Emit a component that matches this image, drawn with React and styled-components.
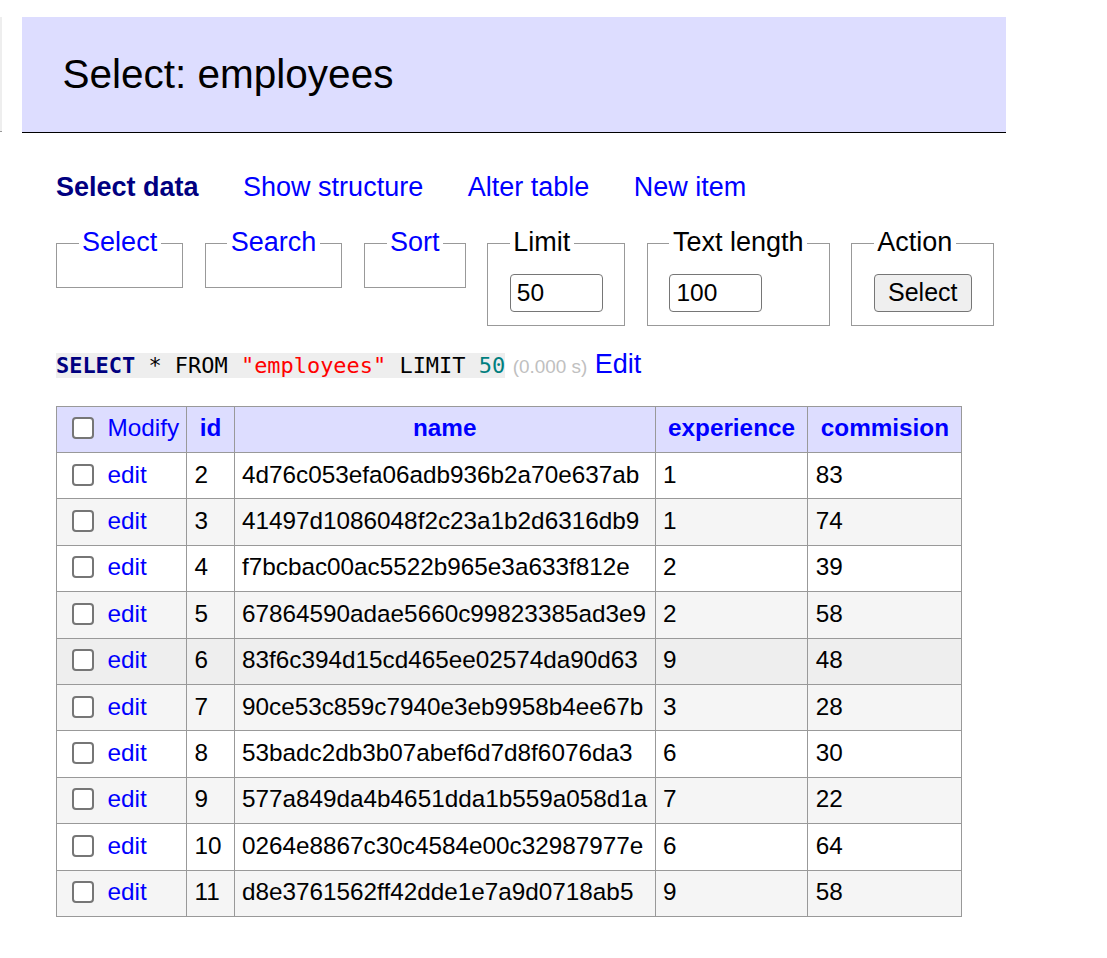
import React from "react";
import styled, { createGlobalStyle } from "styled-components";

const GlobalStyle = createGlobalStyle`
  body {
    margin: 0;
    background: #fff;
    color: #000;
    font: 27px/1.25 "Liberation Sans", Arial, Helvetica, sans-serif;
  }
  a {
    color: blue;
    text-decoration: none;
  }
`;

const Page = styled.div`
  display: flex;
  align-items: flex-start;
`;

const MenuEdge = styled.div`
  flex: 0 0 2px;
  margin-top: 17px;
  height: 114px;
  background: #eee;
  border-bottom: 1px solid #999;
`;

const Content = styled.div`
  width: 950px;
  margin-left: 54px;
  padding: 17px 0 40px;
`;

const Heading = styled.h2`
  margin: 0 0 37.5px -34px;
  padding: 32.4px 40.5px;
  font-size: 40.5px;
  line-height: 1.25;
  font-weight: normal;
  color: #000;
  background: #ddf;
  border-bottom: 1px solid #000;
`;

const Links = styled.p`
  display: flex;
  gap: 44.5px;
  margin: 0;
`;

const NavLink = styled.a`
  white-space: nowrap;
  color: ${(p) => (p.$active ? "navy" : "blue")};
  font-weight: ${(p) => (p.$active ? "bold" : "normal")};
`;

const Filters = styled.div`
  display: flex;
  align-items: flex-start;
  gap: 21.5px;
`;

const Fieldset = styled.fieldset`
  margin: 21.6px 0 0;
  padding: 13.5px 21.6px;
  border: 1px solid #999;
  min-width: 0;
`;

const Legend = styled.legend`
  padding: 0 3.5px;
  line-height: 33.75px;
`;

const TextInput = styled.input`
  display: block;
  box-sizing: border-box;
  width: 93px;
  height: 38px;
  margin: 0;
  padding: 1px 6px;
  border: 1px solid #767676;
  border-radius: 4px;
  font: 24.5px "Liberation Sans", Arial, sans-serif;
  color: #000;
  background: #fff;
`;

const Button = styled.button`
  display: block;
  box-sizing: border-box;
  width: 98px;
  height: 38px;
  margin: 0;
  padding: 0;
  border: 1px solid #767676;
  border-radius: 4px;
  background: #efefef;
  font: 25px "Liberation Sans", Arial, sans-serif;
  color: #000;
`;

const Query = styled.p`
  margin: 21.6px 0 0;
  white-space: nowrap;
`;

const Code = styled.code`
  font-family: "DejaVu Sans Mono", monospace;
  font-size: 21.94px;
  background: #eee;
`;

const Sql = styled.span`
  color: ${(p) => p.$color || "#000"};
  font-weight: ${(p) => (p.$bold ? "bold" : "normal")};
`;

const Time = styled.span`
  color: silver;
  font-size: 18.9px;
`;

const Table = styled.table`
  margin-top: 24.3px;
  border-collapse: collapse;
  font-size: 24.3px;
  line-height: 1.25;
`;

const Row = styled.tr`
  height: 46.4px;
  background: ${(p) => p.$bg};
`;

const HeadCell = styled.th`
  padding: 3.9px 12.4px 5.8px;
  border: 1px solid #999;
  background: #ddf;
  text-align: center;
  font-weight: bold;
  white-space: nowrap;
`;

const Cell = styled.td`
  padding: 3.9px 7.29px 5.8px;
  border: 1px solid #999;
  background: ${(p) => (p.$head ? "#ddf" : "transparent")};
  white-space: nowrap;
  vertical-align: middle;
`;

const Check = styled.input.attrs({ type: "checkbox" })`
  appearance: none;
  box-sizing: border-box;
  display: inline-block;
  width: 22px;
  height: 22px;
  margin: 0 13.8px 0 7.4px;
  vertical-align: -3px;
  border: 2px solid #767676;
  border-radius: 4px;
  background: #fff;
`;

const rows = [
  [2, "4d76c053efa06adb936b2a70e637ab", 1, 83],
  [3, "41497d1086048f2c23a1b2d6316db9", 1, 74],
  [4, "f7bcbac00ac5522b965e3a633f812e", 2, 39],
  [5, "67864590adae5660c99823385ad3e9", 2, 58],
  [6, "83f6c394d15cd465ee02574da90d63", 9, 48],
  [7, "90ce53c859c7940e3eb9958b4ee67b", 3, 28],
  [8, "53badc2db3b07abef6d7d8f6076da3", 6, 30],
  [9, "577a849da4b4651dda1b559a058d1a", 7, 22],
  [10, "0264e8867c30c4584e00c32987977e", 6, 64],
  [11, "d8e3761562ff42dde1e7a9d0718ab5", 9, 58],
];

// row 6 is under the mouse in the screenshot
const rowBg = (i, id) => (id === 6 ? "#eee" : i % 2 ? "#f5f5f5" : "#fff");

const App = () => (
  <Page>
    <GlobalStyle />
    <MenuEdge />
    <Content>
      <Heading>Select: employees</Heading>

      <Links>
        <NavLink href="#" $active>Select data</NavLink>
        <NavLink href="#">Show structure</NavLink>
        <NavLink href="#">Alter table</NavLink>
        <NavLink href="#">New item</NavLink>
      </Links>

      <form onSubmit={(e) => e.preventDefault()}>
        <Filters>
          {["Select", "Search", "Sort"].map((name) => (
            <Fieldset key={name}>
              <Legend><a href="#">{name}</a></Legend>
              <div />
            </Fieldset>
          ))}
          <Fieldset>
            <Legend>Limit</Legend>
            <TextInput defaultValue="50" />
          </Fieldset>
          <Fieldset>
            <Legend>Text length</Legend>
            <TextInput defaultValue="100" />
          </Fieldset>
          <Fieldset>
            <Legend>Action</Legend>
            <Button type="submit">Select</Button>
          </Fieldset>
        </Filters>
      </form>

      <Query>
        <Code>
          <Sql $color="navy" $bold>SELECT</Sql> * FROM{" "}
          <Sql $color="red">"employees"</Sql> LIMIT{" "}
          <Sql $color="#007F7F">50</Sql>
        </Code>{" "}
        <Time>(0.000 s)</Time> <a href="#">Edit</a>
      </Query>

      <Table>
        <thead>
          <Row $bg="#ddf">
            <Cell $head>
              <Check />
              <a href="#">Modify</a>
            </Cell>
            {["id", "name", "experience", "commision"].map((col) => (
              <HeadCell key={col}><a href="#">{col}</a></HeadCell>
            ))}
          </Row>
        </thead>
        <tbody>
          {rows.map(([id, name, exp, com], i) => (
            <Row key={id} $bg={rowBg(i, id)}>
              <Cell>
                <Check />
                <a href="#">edit</a>
              </Cell>
              <Cell>{id}</Cell>
              <Cell>{name}</Cell>
              <Cell>{exp}</Cell>
              <Cell>{com}</Cell>
            </Row>
          ))}
        </tbody>
      </Table>
    </Content>
  </Page>
);

export default App;
